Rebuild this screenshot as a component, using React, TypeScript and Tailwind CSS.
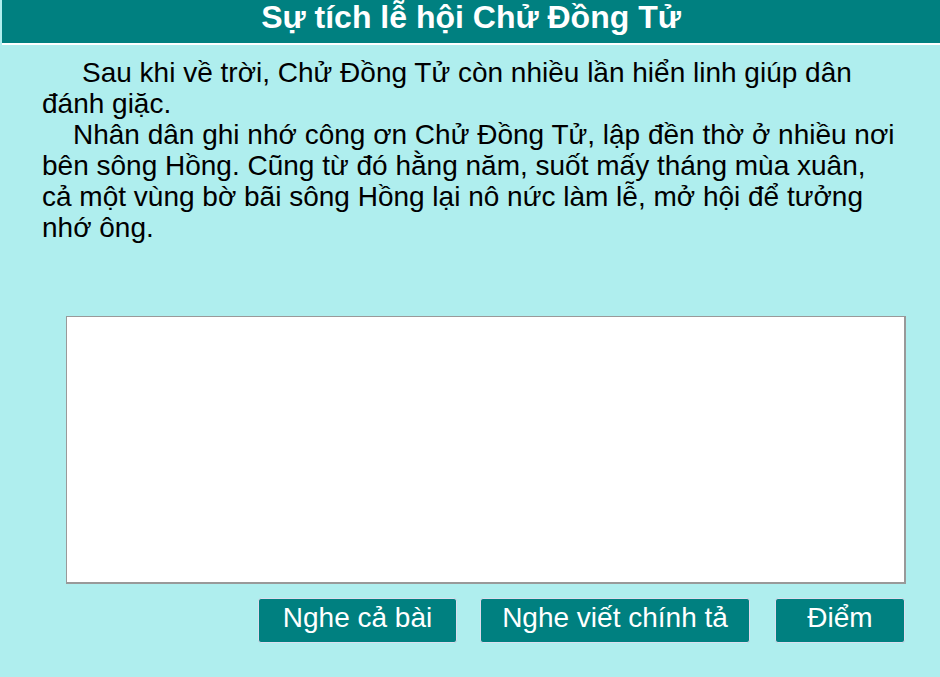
import React from 'react'

export default function App() {
	return (
		<div className="w-[940px] h-[677px] bg-[#afeeee] overflow-hidden" style={{ fontFamily: '"Liberation Sans", Arial, sans-serif' }}>
			<div className="ml-[2px] h-[45px] bg-[#008080] border-b-2 border-white flex items-start justify-center pt-[1px]">
				<h1 className="text-white font-bold text-[32px] leading-none">Sự tích lễ hội Chử Đồng Tử</h1>
			</div>

			<div className="pl-[42px] pr-[40px] pt-[12px] text-[28px] leading-[31px] text-black">
				<p className="indent-[40px]">Sau khi về trời, Chử Đồng Tử còn nhiều lần hiển linh giúp dân đánh giặc.</p>
				<p className="indent-[31px]">
					Nhân dân ghi nhớ công ơn Chử Đồng Tử, lập đền thờ ở nhiều nơi bên sông Hồng. Cũng từ đó hằng năm, suốt mấy tháng mùa xuân, cả một vùng bờ bãi sông Hồng lại nô nức làm lễ, mở hội để tưởng nhớ ông.
				</p>
			</div>

			<div className="ml-[66px] mt-[73px] w-[840px] h-[268px] bg-white border border-[#999] border-b-2 border-r-2" />

			<div className="flex mt-[14px] ml-[258px]">
				<button className="w-[199px] h-[45px] pb-[6px] bg-[#008080] text-white text-[28px] leading-none rounded-[3px] border border-[#dde]">Nghe cả bài</button>
				<button className="ml-[23px] w-[270px] h-[45px] pb-[6px] bg-[#008080] text-white text-[28px] leading-none rounded-[3px] border border-[#dde]">Nghe viết chính tả</button>
				<button className="ml-[25px] w-[130px] h-[45px] pb-[6px] bg-[#008080] text-white text-[28px] leading-none rounded-[3px] border border-[#dde]">Điểm</button>
			</div>
		</div>
	)
}
